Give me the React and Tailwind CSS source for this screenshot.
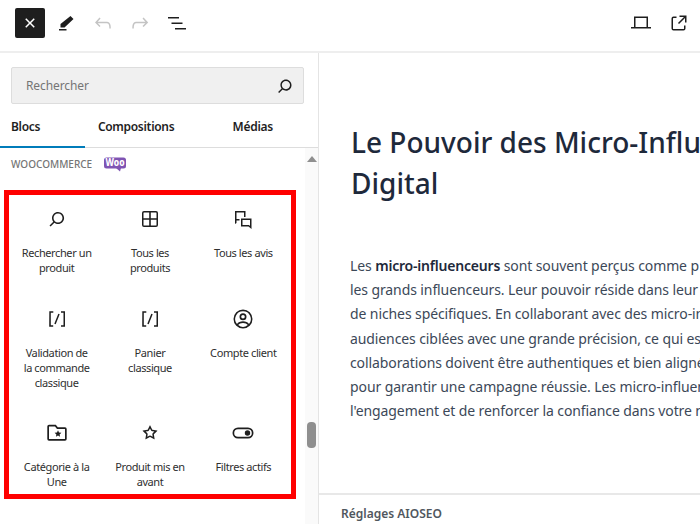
import React from 'react'

function Icon({ d, size = 24, className = '' }){
  return (
    <svg width={size} height={size} viewBox="0 0 24 24" fill="currentColor" fillRule="evenodd" className={className}>
      <path d={d} />
    </svg>
  )
}

const ICONS = {
  close: 'M12 13.06l3.712 3.713 1.061-1.06L13.061 12l3.712-3.712-1.06-1.06L12 10.938 8.288 7.227l-1.061 1.06L10.939 12l-3.712 3.712 1.06 1.061L12 13.061z',
  pencil: 'M16.500 5l3 3-9 8.500H6.500V13l10-8zM5 18h7.500v1.500H5V18z',
  undo: 'M18.3 11.7c-.6-.6-1.4-.9-2.3-.9H6.7l2.9-3.3-1.1-1-4.5 5L8.5 16l1-1-2.7-2.7H16c.5 0 .9.2 1.3.5 1 1 1 3.4 1 4.5v.3h1.5v-.2c0-1.5 0-4.3-1.5-5.7z',
  redo: 'M15.6 6.5l-1.1 1 2.9 3.3H8c-.9 0-1.7.3-2.3.9-1.4 1.5-1.4 4.2-1.4 5.6v.2h1.5v-.3c0-1.1 0-3.5 1-4.5.3-.3.7-.5 1.3-.5h9.2L14.5 15l1.1 1.1 4.6-4.6-4.6-5z',
  list: 'M3 6h11v1.5H3V6zm3.5 5.5h11V13h-11v-1.5zM21 17H10v1.5h11V17z',
  search: 'M13 5c-3.3 0-6 2.7-6 6 0 1.4.5 2.7 1.3 3.7l-3.8 3.8 1.1 1.1 3.8-3.8c1 .8 2.3 1.3 3.7 1.3 3.3 0 6-2.7 6-6S16.3 5 13 5zm0 10.5c-2.5 0-4.5-2-4.5-4.5s2-4.5 4.5-4.5 4.5 2 4.5 4.5-2 4.5-4.5 4.5z',
  grid: 'M6 4h12a2 2 0 0 1 2 2v12a2 2 0 0 1-2 2H6a2 2 0 0 1-2-2V6a2 2 0 0 1 2-2zm0 1.5a.5.5 0 0 0-.5.5v5.2h5.7V5.500H6zm6.800 0v5.700h5.700V6a.5.5 0 0 0-.5-.5h-5.200zM5.500 12.800V18a.5.5 0 0 0 .5.5h5.200v-5.700H5.500zm7.300 0v5.700H18a.5.5 0 0 0 .5-.5v-5.200h-5.700z',
  reviews: 'M4 4h10.500v6H13V5.500H5.500V12h3v1.500h-3V16L4 17V4zM10 11.500h10.500V22l-3-2.500H10v-8zm1.500 1.500v5h6.500l1 1v-6h-7.500z',
  shortcode: 'M16 4.200v1.500h2.500v12.500H16v1.500h4V4.200h-4zM4.200 19.800h4v-1.500H5.800V5.800h2.500V4.200h-4l-.1 15.600zm5.100-3.100l1.400.6 4-10-1.400-.6-4 10z',
  account: 'M12 2.500a9.500 9.500 0 1 1 0 19 9.500 9.500 0 0 1 0-19zm0 1.700a7.800 7.800 0 0 0-6 12.800c1.100-1.700 3.400-2.700 6-2.700s4.900 1 6 2.700A7.800 7.800 0 0 0 12 4.200zm0 11.700c-2.100 0-3.900.8-4.800 2.200a7.800 7.800 0 0 0 9.600 0c-.9-1.400-2.700-2.200-4.800-2.200zM12 6.200a3.500 3.500 0 1 1 0 7 3.500 3.500 0 0 1 0-7zm0 1.700a1.800 1.800 0 1 0 0 3.600 1.800 1.800 0 0 0 0-3.600z',
  folderStar: 'M4 3.800h6.800l2 2.500H20a1.700 1.700 0 0 1 1.700 1.700V18a1.700 1.700 0 0 1-1.700 1.700H4A1.700 1.700 0 0 1 2.300 18V5.500A1.700 1.700 0 0 1 4 3.800zM4 5.500V18h16V8h-8l-2-2.500H4zm9 3.800l1 2.200 2.400.3-1.800 1.600.5 2.400-2.100-1.200-2.100 1.200.5-2.400-1.800-1.600 2.400-.3 1-2.200z',
  star: 'M9.706 8.646a.25.25 0 01-.188.137l-4.626.672a.25.25 0 00-.139.427l3.348 3.262a.25.25 0 01.072.222l-.79 4.607a.25.25 0 00.362.264l4.138-2.176a.25.25 0 01.233 0l4.137 2.175a.25.25 0 00.363-.263l-.79-4.607a.25.25 0 01.072-.222l3.347-3.262a.25.25 0 00-.139-.427l-4.626-.672a.25.25 0 01-.188-.137l-2.069-4.192a.25.25 0 00-.448 0L9.706 8.646zM12 7.390l-.948 1.921a1.750 1.750 0 01-1.317.957l-2.120.308 1.534 1.495c.412.402.6.982.503 1.550l-.362 2.110 1.896-.997a1.750 1.750 0 011.629 0l1.895.997-.362-2.110a1.750 1.750 0 01.504-1.550l1.533-1.495-2.120-.308a1.750 1.750 0 01-1.317-.957L12 7.390z',
  toggle: 'M7 6.500h10a5.500 5.500 0 0 1 0 11H7a5.500 5.500 0 0 1 0-11zm0 1.700a3.800 3.800 0 0 0 0 7.600h10a3.800 3.800 0 0 0 0-7.600H7zm9.500 1.100a2.700 2.700 0 1 1 0 5.400 2.700 2.700 0 0 1 0-5.400z',
  laptop: 'M5 5.500h14V16h3v1.500H2V16h3V5.500zm1.500 1.500v9h11V7h-11z',
  external: 'M19.500 4.500h-7V6h4.440l-5.970 5.970 1.060 1.060L18 7.060v4.440h1.500v-7Zm-13 1a2 2 0 0 0-2 2v10a2 2 0 0 0 2 2h10a2 2 0 0 0 2-2v-3H17v3a.5.5 0 0 1-.5.5h-10a.5.5 0 0 1-.5-.5v-10a.5.5 0 0 1 .5-.5h3V5.500h-3Z',
}

const BLOCKS = [
  { icon: 'search', label: ['Rechercher un', 'produit'] },
  { icon: 'grid', label: ['Tous les', 'produits'] },
  { icon: 'reviews', label: ['Tous les avis'] },
  { icon: 'shortcode', label: ['Validation de', 'la commande', 'classique'] },
  { icon: 'shortcode', label: ['Panier', 'classique'] },
  { icon: 'account', label: ['Compte client'] },
  { icon: 'folderStar', label: ['Catégorie à la', 'Une'] },
  { icon: 'star', label: ['Produit mis en', 'avant'] },
  { icon: 'toggle', label: ['Filtres actifs'] },
]

const LINES = [
  'sont souvent perçus comme p',
  'les grands influenceurs. Leur pouvoir réside dans leur capacité',
  'de niches spécifiques. En collaborant avec des micro-influenceurs',
  'audiences ciblées avec une grande précision, ce qui est essentiel',
  'collaborations doivent être authentiques et bien alignées',
  'pour garantir une campagne réussie. Les micro-influenceurs',
  "l'engagement et de renforcer la confiance dans votre marque",
]

function BlockCell({ block, tall }){
  return (
    <div className={`flex flex-col items-center text-center ${tall ? 'h-[114px]' : 'h-[100px]'}`}>
      <Icon d={ICONS[block.icon]} className="text-[#1e1e1e] mb-[14px]" />
      <div className="text-[11px] leading-[15px] text-[#2f2f2f] tracking-[-0.4px]">
        {block.label.map(l => <div key={l}>{l}</div>)}
      </div>
    </div>
  )
}

export default function App(){
  return (
    <div className="w-[700px] h-[524px] overflow-hidden bg-white flex flex-col font-['Noto_Sans',sans-serif]">
      <header className="h-[53px] shrink-0 border-b-2 border-[#eeeeee] flex items-center justify-between pl-[15px] pr-[9px] pb-[5px]">
        <div className="flex items-center">
          <button className="w-[30px] h-[30px] bg-[#1e1e1e] rounded-[2px] flex items-center justify-center text-white">
            <Icon d={ICONS.close} />
          </button>
          <div className="flex items-center gap-[13px] ml-[9px]">
            <Icon d={ICONS.pencil} className="text-[#1e1e1e]" />
            <Icon d={ICONS.undo} className="text-[#c4c4c4]" />
            <Icon d={ICONS.redo} className="text-[#c4c4c4]" />
            <Icon d={ICONS.list} className="text-[#1e1e1e]" />
          </div>
        </div>
        <div className="flex items-center gap-[14px] text-[#1e1e1e]">
          <Icon d={ICONS.laptop} />
          <Icon d={ICONS.external} />
        </div>
      </header>

      <div className="flex-1 flex min-h-0">
        <aside className="w-[319px] shrink-0 border-r border-[#e4e4e4] flex flex-col">
          <div className="pr-[14px] pl-[11px] pt-[14px]">
            <div className="h-[37px] bg-[#f0f0f0] border border-[#dddddd] rounded-[2px] flex items-center justify-between pl-[14px] pr-[7px]">
              <span className="text-[12px] text-[#757575] tracking-[-0.1px] pt-[1px]">Rechercher</span>
              <Icon d={ICONS.search} size={22} className="text-[#1e1e1e]" />
            </div>
          </div>

          <nav className="mt-[10px] h-[34px] border-b border-[#dddddd] flex text-[12px] font-semibold text-[#1e1e1e] tracking-[-0.3px]">
            <div className="w-[85px] h-[34px] pl-[11px] pb-[7px] flex items-center border-b-2 border-[#007cba]">Blocs</div>
            <div className="w-[103px] pb-[8px] flex items-center justify-center">Compositions</div>
            <div className="w-[131px] pb-[8px] flex items-center justify-center">Médias</div>
          </nav>

          <div className="flex-1 flex min-h-0">
            <div className="w-[305px] shrink-0">
              <div className="h-[42px] pl-[11px] flex items-center pb-[9px]">
                <span className="text-[10px] font-medium text-[#757575]">WOOCOMMERCE</span>
                <svg width="22" height="15" viewBox="0 0 22 15" className="ml-[12px]">
                  <rect x="0" y="0.500" width="22" height="11" rx="2.500" fill="#7f54b3" />
                  <path d="M12 11h5l-1 3.500z" fill="#7f54b3" />
                  <text x="11" y="9.300" textAnchor="middle" fontSize="10" fontWeight="800" textLength="19" lengthAdjust="spacingAndGlyphs" fill="#fff">Woo</text>
                </svg>
              </div>
              <div className="ml-[4px] w-[292px] h-[309px] border-[5px] border-[#ff0000] pt-[12px] px-[1px]">
                <div className="grid grid-cols-3">
                  {BLOCKS.map((b, i) => <BlockCell key={i} block={b} tall={i >= 3 && i < 6} />)}
                </div>
              </div>
            </div>
            <div className="flex-1 bg-[#fafafa] flex flex-col items-center pt-[8px]">
              <div className="w-0 h-0 border-l-[5px] border-r-[5px] border-b-[6px] border-l-transparent border-r-transparent border-b-[#8f8f8f]" />
              <div className="mt-[260px] w-[9px] h-[26px] rounded-[4px] bg-[#8f8f8f]" />
            </div>
          </div>
        </aside>

        <main className="flex-1 min-w-0 flex flex-col">
          <div className="flex-1 min-h-0 overflow-hidden pl-[32px] pt-[69px]">
            <h1 className="text-[28px] leading-[41px] font-medium text-[#1e293b] whitespace-nowrap">
              Le Pouvoir des Micro-Influenceurs dans le Marketing<br />Digital
            </h1>
            <div className="mt-[50px] ml-[-1px] text-[14px] leading-[24.200px] text-[#3c4858] whitespace-nowrap tracking-[-0.1px]">
              <div>Les <strong className="font-semibold text-[#1e293b] tracking-[-0.2px]">micro-influenceurs</strong> {LINES[0]}</div>
              {LINES.slice(1).map(l => <div key={l}>{l}</div>)}
            </div>
          </div>
          <div className="h-[31px] shrink-0 border-t-2 border-[#e8e8e8] pl-[22px] pt-[9px] flex items-center">
            <span className="text-[12px] font-semibold text-[#50575e]">Réglages AIOSEO</span>
          </div>
        </main>
      </div>
    </div>
  )
}
